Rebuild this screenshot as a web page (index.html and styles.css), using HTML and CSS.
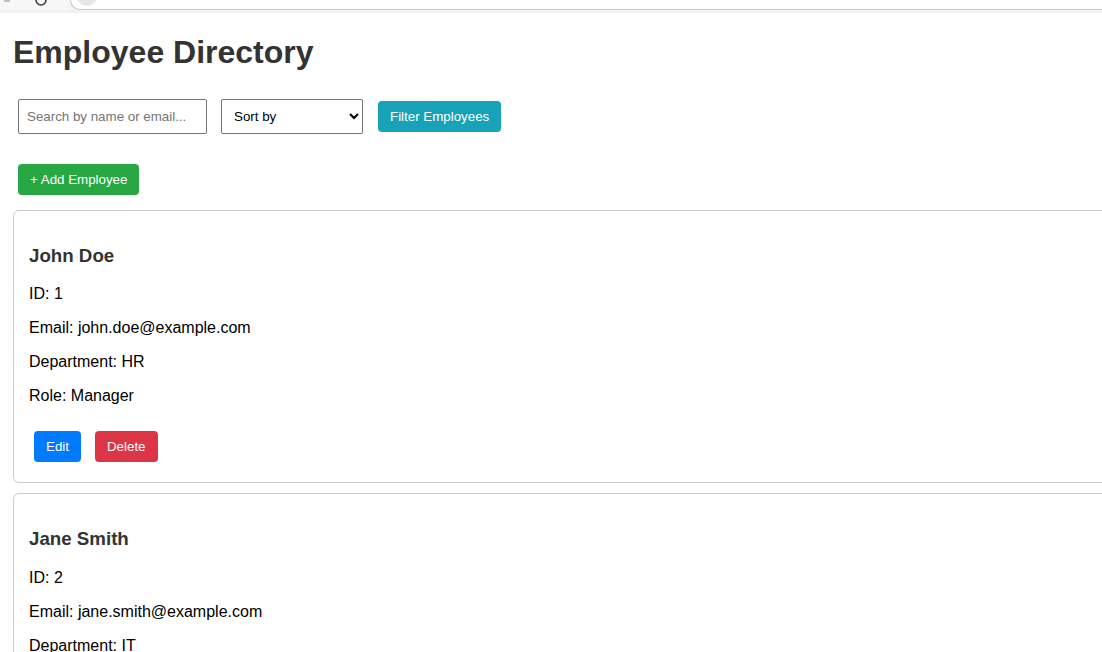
FILE: index.html
```html
<!DOCTYPE html>
<html lang="en">
<head>
<meta charset="utf-8">
<title>Employee Directory</title>
<link rel="stylesheet" href="styles.css">
</head>
<body>
<div class="browser-bar">
  <div class="nav">
    <svg class="nav-icons" width="70" height="13" viewBox="0 0 70 13">
      <path d="M36 0 A5 5 0 0 0 46 0" fill="none" stroke="#3c3c3c" stroke-width="1.6"/>
      <path d="M4 1 L10 1" stroke="#9a9a9a" stroke-width="1.2"/>
    </svg>
  </div>
  <div class="omnibox">
    <svg class="site-info" width="30" height="9" viewBox="0 0 30 9">
      <circle cx="14" cy="-4" r="10" fill="#e6e6e6"/>
    </svg>
  </div>
</div>

<main class="page">
  <h1 class="title">Employee Directory</h1>

  <div class="controls">
    <input class="search" type="text" placeholder="Search by name or email...">
    <select class="sort">
      <option>Sort by</option>
      <option>Name</option>
      <option>Department</option>
    </select>
    <button class="btn btn-filter">Filter Employees</button>
  </div>

  <div class="add-row">
    <button class="btn btn-add">+ Add Employee</button>
  </div>

  <div class="cards">
    <section class="card">
      <h3 class="name">John Doe</h3>
      <p class="field">ID: 1</p>
      <p class="field">Email: john.doe@example.com</p>
      <p class="field">Department: HR</p>
      <p class="field">Role: Manager</p>
      <div class="actions">
        <button class="btn btn-edit">Edit</button>
        <button class="btn btn-delete">Delete</button>
      </div>
    </section>

    <section class="card">
      <h3 class="name">Jane Smith</h3>
      <p class="field">ID: 2</p>
      <p class="field">Email: jane.smith@example.com</p>
      <p class="field">Department: IT</p>
      <p class="field">Role: Developer</p>
      <div class="actions">
        <button class="btn btn-edit">Edit</button>
        <button class="btn btn-delete">Delete</button>
      </div>
    </section>
  </div>
</main>
</body>
</html>
```
FILE: styles.css
```css
html, body {
  margin: 0;
  padding: 0;
}

body {
  overflow: hidden;
  background: #ffffff;
  font-family: "Liberation Sans", Arial, sans-serif;
  color: #000;
}

/* top browser chrome fragment */
.browser-bar {
  display: flex;
  height: 13px;
  background: #f1f1f1;
}

.nav {
  width: 70px;
  flex: none;
  background: #f7f7f7;
  height: 10px;
}

.nav-icons {
  display: block;
}

.omnibox {
  flex: 1;
  height: 9px;
  background: #ffffff;
  border-left: 1px solid #c8c8c8;
  border-bottom: 1px solid #c8c8c8;
  border-bottom-left-radius: 14px;
}

.site-info {
  display: block;
  margin-left: 2px;
}

/* page */
.page {
  padding: 21px 0 0 13px;
  margin-right: -40px;
}

.title {
  margin: 0;
  font-size: 32px;
  line-height: 37px;
  font-weight: bold;
  color: #333333;
}

.controls {
  display: flex;
  align-items: center;
  margin-top: 28px;
  padding-left: 5px;
}

.search {
  box-sizing: border-box;
  width: 189px;
  height: 35px;
  padding: 8px;
  border: 1px solid #767676;
  border-radius: 2px;
  font-family: "Liberation Sans", Arial, sans-serif;
  font-size: 13.333px;
  color: #000;
  margin: 0 14px 0 0;
}

.search::placeholder {
  color: #757575;
}

.sort {
  box-sizing: border-box;
  width: 142px;
  height: 35px;
  padding: 0 4px 0 8px;
  border: 1px solid #767676;
  border-radius: 2px;
  background: #ffffff;
  font-family: "Liberation Sans", Arial, sans-serif;
  font-size: 13.333px;
  color: #000;
  margin: 0 15px 0 0;
}

.btn {
  box-sizing: border-box;
  height: 31px;
  padding: 0 12px;
  border: none;
  border-radius: 4px;
  color: #ffffff;
  font-family: "Liberation Sans", Arial, sans-serif;
  font-size: 13.333px;
  line-height: 31px;
  white-space: nowrap;
  cursor: pointer;
}

.btn-filter {
  background: #17a2b8;
}

.add-row {
  display: flex;
  margin-top: 30px;
  padding-left: 5px;
}

.btn-add {
  background: #28a745;
}

.cards {
  display: flex;
  flex-direction: column;
  gap: 10px;
  margin-top: 15px;
}

.card {
  border: 1px solid #cccccc;
  border-radius: 6px;
  padding: 15px;
}

.name {
  margin: 18.72px 0;
  font-size: 18.72px;
  font-weight: bold;
  color: #333333;
}

.field {
  margin: 16px 0;
  font-size: 16px;
  line-height: 18px;
  color: #000;
}

.actions {
  display: flex;
  gap: 14px;
  padding: 10px 5px 5px;
}

.btn-edit {
  background: #007bff;
}

.btn-delete {
  background: #dc3545;
}
```
